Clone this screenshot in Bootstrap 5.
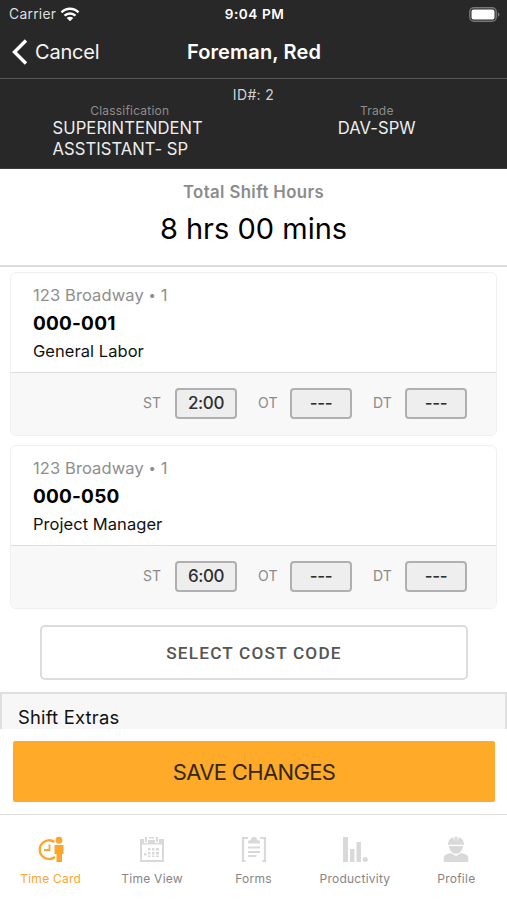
<!DOCTYPE html>
<html lang="en">
<head>
<meta charset="utf-8">
<meta name="viewport" content="width=device-width, initial-scale=1">
<title>Time Card</title>
<link href="https://cdn.jsdelivr.net/npm/bootstrap@5.3.0/dist/css/bootstrap.min.css" rel="stylesheet">
<style>
body{font-family:Inter,"Liberation Sans",sans-serif;color:#111;background:#fff}
.screen{height:900px;width:507px}
.topbar{background:#282828;color:#f5f5f5;height:169px;border-bottom:1px solid #3c3c3c}
.status{height:27px;font-size:13.8px;line-height:27px;padding:1px 7px 0 9px}
.status>*{flex:1 1 0}
.carrier{letter-spacing:.3px;color:#dedede}
.clock{font-weight:600;font-size:13.6px;color:#fff;letter-spacing:.55px}
.navrow{height:52px;border-bottom:1px solid #565656;padding:0 12px}
.navrow>*{flex:1 1 0}
.cancel{font-size:20px;letter-spacing:-.2px;line-height:48px;margin-left:-1px}
.heading{font-size:20px;font-weight:600;letter-spacing:.15px;color:#fff;line-height:48px;padding-left:1px}
.navrow>*{margin-top:-2px}
.idline{font-size:14px;line-height:16px;padding-top:8px;letter-spacing:.35px;color:#d2d2d2}
.meta-label{font-size:12px;line-height:16px;color:#8d8d8d;letter-spacing:.2px}
.meta-value{font-size:16.6px;line-height:20.5px;letter-spacing:.05px;color:#ededed;margin-top:-1px}
.classif{padding-left:2px}
.trade{padding-right:7px}
.total{height:98px;border-bottom:2px solid #dcdcdc}
.total-label{font-size:16.8px;font-weight:600;color:#8c8c8c;line-height:22px;padding-top:12px;letter-spacing:.38px}
.total-value{font-size:29px;letter-spacing:0;line-height:34px;padding-top:9px;color:#000}
.entries{padding:5px 10px 0;gap:9px}
.entry{height:164px;border:1px solid #f0f0f0;border-radius:6px;width:487px}
.entry-top{height:100px;padding:10px 22px 0;border-bottom:1px solid #dedede}
.site{font-size:16.5px;line-height:24px;color:#8e8e8e;letter-spacing:.1px}
.dot{font-size:13px;vertical-align:1px}
.code{font-size:19px;font-weight:700;line-height:30px;padding-top:2px;color:#000;letter-spacing:.2px}
.task{font-size:16.5px;line-height:24px;letter-spacing:.05px}
.hours{background:#f8f8f8;padding:0 29px 2px 0;border-radius:0 0 5px 5px}
.hlabel{font-size:14px;color:#8a8a8a;width:32px;letter-spacing:.1px;line-height:30px}
.hgap{margin-left:21px}
.hbox{width:62px;height:31px;border:2px solid #b0b0b0;border-radius:4px;background:#eee;font-size:17px;font-weight:500;line-height:27px;color:#303030;letter-spacing:-.4px}
.select-code{width:428px;height:55px;border:2px solid #dcdcdc;border-radius:5px;color:#555;font-family:Roboto,sans-serif;font-size:17.2px;font-weight:500;letter-spacing:1.2px;margin:16px 0 0 40px;padding-top:3px;background:#fff}
.extras{height:37px;margin-top:12px;background:#f7f7f7;border:2px solid #dfdfdf;border-bottom:0;padding:10px 16px 0;font-size:18.4px;line-height:26px;letter-spacing:.2px}
.save{width:482px;height:61px;margin:12px 0 0 13px;padding-top:3px;background:#ffaa29;color:#35270f;font-size:22px;letter-spacing:-.65px;border:0;border-radius:2px}
.tabs{height:86px;margin-top:12px;border-top:1px solid #dedede}
.tab{flex:1 1 0;padding-top:20px;font-size:12px;color:#858585;letter-spacing:.25px;line-height:16px}
.tab svg{color:#d9d9d9;margin-bottom:8px}
.tab.on,.tab.on svg{color:#fca62d}
</style>
<script src="https://cdn.jsdelivr.net/npm/bootstrap@5.3.0/dist/js/bootstrap.bundle.min.js"></script>
</head>
<body>
<div class="screen d-flex flex-column overflow-hidden">
<header class="topbar flex-shrink-0">
<div class="status d-flex align-items-center">
<div class="d-flex align-items-center"><span class="carrier">Carrier</span>
<svg class="ms-1" width="20" height="15" viewBox="0 0 20 15" fill="none" stroke="#fff" stroke-width="2.4"><path d="M1.5 5.3C6.3.6 13.7.6 18.5 5.3M4.500 8.700c3.200-3 7.800-3 11 0"/><path d="M6.700 11c2-1.800 4.600-1.800 6.600 0L10 14.300z" fill="#fff" stroke="none"/></svg></div>
<div class="clock text-center">9:04 PM</div>
<div class="d-flex justify-content-end"><svg width="31" height="15" viewBox="0 0 31 15"><rect x=".8" y=".8" width="26.4" height="13.4" rx="4" fill="none" stroke="#777" stroke-width="1.4"/><rect x="2.500" y="2.500" width="23" height="10" rx="2" fill="#fff"/><path d="M28.800 5.200c2.300 1 2.300 3.600 0 4.600z" fill="#777"/></svg></div>
</div>
<div class="navrow d-flex align-items-center">
<div class="d-flex align-items-center gap-2"><svg width="16" height="26" viewBox="0 0 16 26" fill="none" stroke="#fff" stroke-width="3.4"><path d="M14 1.500 2.500 13 14 24.500"/></svg><span class="cancel">Cancel</span></div>
<div class="heading text-center text-nowrap">Foreman, Red</div><div></div>
</div>
<div class="idline text-center">ID#: 2</div>
<div class="row g-0">
<div class="classif col-6 d-flex flex-column align-items-center"><div class="meta-label ps-1">Classification</div><div class="meta-value">SUPERINTENDENT<br>ASSTISTANT- SP</div></div>
<div class="trade col-6 d-flex flex-column align-items-center"><div class="meta-label">Trade</div><div class="meta-value">DAV-SPW</div></div>
</div>
</header>
<section class="total text-center flex-shrink-0"><div class="total-label">Total Shift Hours</div><div class="total-value">8 hrs 00 mins</div></section>
<main class="entries d-flex flex-column flex-shrink-0">
<article class="entry d-flex flex-column">
<div class="entry-top"><div class="site">123 Broadway <span class="dot">•</span> 1</div><div class="code">000-001</div><div class="task">General Labor</div></div>
<div class="hours d-flex flex-fill align-items-center justify-content-end"><span class="hlabel">ST</span><span class="hbox text-center">2:00</span><span class="hlabel hgap">OT</span><span class="hbox text-center">---</span><span class="hlabel hgap">DT</span><span class="hbox text-center">---</span></div>
</article>
<article class="entry d-flex flex-column">
<div class="entry-top"><div class="site">123 Broadway <span class="dot">•</span> 1</div><div class="code">000-050</div><div class="task">Project Manager</div></div>
<div class="hours d-flex flex-fill align-items-center justify-content-end"><span class="hlabel">ST</span><span class="hbox text-center">6:00</span><span class="hlabel hgap">OT</span><span class="hbox text-center">---</span><span class="hlabel hgap">DT</span><span class="hbox text-center">---</span></div>
</article>
</main>
<button class="select-code flex-shrink-0">SELECT COST CODE</button>
<section class="extras flex-shrink-0">Shift Extras</section>
<button class="save flex-shrink-0">SAVE CHANGES</button>
<nav class="tabs d-flex flex-shrink-0">
<div class="tab on d-flex flex-column align-items-center"><svg width="26" height="28" viewBox="0 0 26 28"><path d="M16.500 7A9.400 9.400 0 1 0 17 22" fill="none" stroke="currentColor" stroke-width="2.400"/><path d="M11.500 9.500V15H6" fill="none" stroke="currentColor" stroke-width="1.800"/><circle cx="21" cy="5.200" r="3.400" fill="currentColor"/><path d="M16.500 10h9v9H24v8h-5.500v-8h-2z" fill="currentColor"/></svg>Time Card</div>
<div class="tab d-flex flex-column align-items-center"><svg width="26" height="28" viewBox="0 0 26 28" fill="currentColor"><path d="M1 4h4v4h4V5h7v3h4V4h5v23H1zM3 9.500v15.500h20V9.500z" fill-rule="evenodd"/><path d="M6 2h2v5H6zM10 2h5v1.500h-5zM17 2h2v5h-2z"/><path d="M9 13h2.500v2.500H9zM13 13h2.500v2.500H13zM17 13h3v2.500h-3zM5 18h2.500v2.500H5zM9 17h2.500v2.500H9zM13 17h2.500v2.500H13zM17 17h3v2.500h-3M9 20.500h2.500v1.500H9zM13 20.500h2.500v1.500H13zM17 20.500h3v1.500h-3z"/></svg>Time View</div>
<div class="tab d-flex flex-column align-items-center"><svg width="26" height="28" viewBox="0 0 26 28" fill="none" stroke="currentColor"><path d="M7 3H2v23h2.500M19 3h5v23h-2.500" stroke-width="2.200"/><path d="M7 8.500V6l3-1c0-4.500 6-4.500 6 0l3 1v2.500z" fill="currentColor" stroke="none"/><path d="M7 12.500h12M7 17h12M7 21h8.500" stroke-width="2.200"/></svg>Forms</div>
<div class="tab d-flex flex-column align-items-center"><svg width="26" height="28" viewBox="0 0 26 28" fill="currentColor"><path d="M1 2h5v25H1zM8 14h4.500v13H8zM14.500 7H19v20h-4.500z"/><circle cx="23.300" cy="24.500" r="2.500"/></svg>Productivity</div>
<div class="tab d-flex flex-column align-items-center"><svg width="26" height="28" viewBox="0 0 26 28" fill="currentColor"><path d="M5 9.800c0-4.300 2-6.800 5-7.600l1.500 4V1.800h3v4.400l1.500-4c3 .8 5 3.300 5 7.600zM6.200 11h13.600c0 4.500-3 7.800-6.800 7.800S6.200 15.500 6.200 11zM.7 27v-4c0-3 3-4 6.800-5l5.500 3 5.500-3c3.800 1 6.800 2 6.800 5v4z"/></svg>Profile</div>
</nav>
</div>
</body>
</html>
